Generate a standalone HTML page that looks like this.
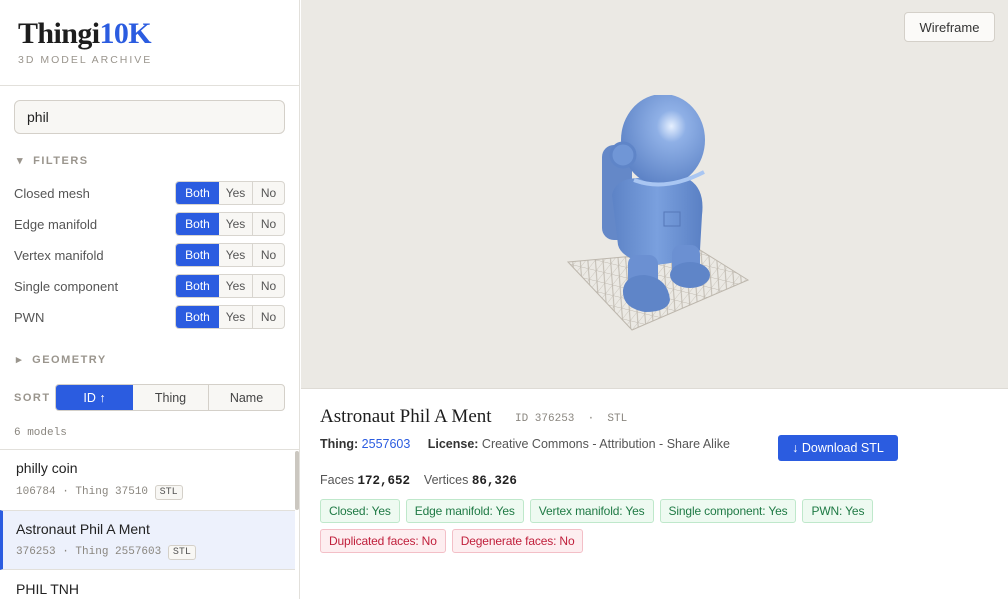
<!DOCTYPE html>
<html><head><meta charset="utf-8"><style>
*{box-sizing:border-box;margin:0;padding:0}
body{width:1008px;height:599px;overflow:hidden;font-family:"Liberation Sans",sans-serif;background:#fff;position:relative;color:#2a2a2a}
.a{position:absolute}
.side{left:0;top:0;width:300px;height:599px;border-right:1px solid #e2e0db;background:#fff}
.lbl{font-size:13px;color:#555;left:14px}
.seg{left:175px;width:110px;height:24px;border:1px solid #d8d5cf;border-radius:4px;overflow:hidden;display:flex;font-size:12px;background:#f8f7f4}
.seg div{display:flex;align-items:center;justify-content:center;color:#555}
.seg .b{width:43px;background:#2b5ce0;color:#fff}
.seg .y{width:34px;border-right:1px solid #d8d5cf}
.seg .n{flex:1}
.cap{font-size:11px;letter-spacing:1.5px;color:#9a958d;font-weight:bold}
.mono{font-family:"Liberation Mono",monospace}
.tag{display:inline-block;font-size:12px;padding:4px 8px;border-radius:3px;margin-right:6px;letter-spacing:-0.15px}
.g{background:#eefaf1;border:1px solid #bfe8cb;color:#1f7a45}
.r{background:#fdeef0;border:1px solid #f3bfc7;color:#c0203c}
</style></head><body>
<div class="a side">
  <div class="a" style="left:18px;top:17px;font-family:'Liberation Serif',serif;font-weight:bold;font-size:30px;letter-spacing:-0.6px;color:#1d1d1d">Thingi<span style="color:#2b5ce0">10K</span></div>
  <div class="a cap" style="left:18px;top:54px;font-weight:normal;font-size:10.5px;letter-spacing:2px">3D MODEL ARCHIVE</div>
  <div class="a" style="left:0;top:85px;width:299px;border-top:1px solid #e2e0db"></div>
  <div class="a" style="left:14px;top:100px;width:271px;height:34px;border:1px solid #d4d0c9;border-radius:6px;background:#f8f7f4;padding:8px 12px;font-size:14px;color:#222">phil</div>
  <div class="a cap" style="left:17px;top:154px">▾&nbsp; FILTERS</div>
  <div class="a lbl" style="top:186px">Closed mesh</div>
  <div class="a seg" style="top:181px"><div class="b">Both</div><div class="y">Yes</div><div class="n">No</div></div>
  <div class="a lbl" style="top:217px">Edge manifold</div>
  <div class="a seg" style="top:212px"><div class="b">Both</div><div class="y">Yes</div><div class="n">No</div></div>
  <div class="a lbl" style="top:248px">Vertex manifold</div>
  <div class="a seg" style="top:243px"><div class="b">Both</div><div class="y">Yes</div><div class="n">No</div></div>
  <div class="a lbl" style="top:279px">Single component</div>
  <div class="a seg" style="top:274px"><div class="b">Both</div><div class="y">Yes</div><div class="n">No</div></div>
  <div class="a lbl" style="top:310px">PWN</div>
  <div class="a seg" style="top:305px"><div class="b">Both</div><div class="y">Yes</div><div class="n">No</div></div>
  <div class="a cap" style="left:16px;top:353px">▸&nbsp; GEOMETRY</div>
  <div class="a cap" style="left:14px;top:392px">SORT</div>
  <div class="a" style="left:55px;top:384px;width:230px;height:27px;border:1px solid #d4d0c9;border-radius:4px;overflow:hidden;display:flex;font-size:12.5px;background:#f8f7f4;color:#444">
    <div style="width:77px;background:#2b5ce0;color:#fff;display:flex;align-items:center;justify-content:center">ID ↑</div>
    <div style="width:76px;border-right:1px solid #d4d0c9;display:flex;align-items:center;justify-content:center">Thing</div>
    <div style="flex:1;display:flex;align-items:center;justify-content:center">Name</div>
  </div>
  <div class="a mono" style="left:14px;top:427px;font-size:11px;color:#8a867f">6 models</div>
  <div class="a" style="left:0;top:449px;width:299px;border-top:1px solid #e2e0db"></div>
  <div class="a" style="left:16px;top:460px;font-size:14px;color:#222">philly coin</div>
  <div class="a mono" style="left:16px;top:486px;font-size:11px;color:#8a867f">106784 · Thing 37510 <span style="border:1px solid #d4d0c9;border-radius:3px;padding:1px 4px;color:#555;font-size:10px;background:#f8f7f4">STL</span></div>
  <div class="a" style="left:295px;top:451px;width:4px;height:59px;background:#cbc7c0;border-radius:2px"></div>
  <div class="a" style="left:0;top:510px;width:295px;height:60px;background:#edf1fc;border-top:1px solid #e2e0db;border-bottom:1px solid #e2e0db;border-left:3px solid #2b5ce0"></div>
  <div class="a" style="left:16px;top:521px;font-size:14px;color:#222">Astronaut Phil A Ment</div>
  <div class="a mono" style="left:16px;top:546px;font-size:11px;color:#8a867f">376253 · Thing 2557603 <span style="border:1px solid #d4d0c9;border-radius:3px;padding:1px 4px;color:#555;font-size:10px;background:#f8f7f4">STL</span></div>
  <div class="a" style="left:16px;top:581px;font-size:14px;color:#222">PHIL TNH</div>
</div>
<div class="a" style="left:301px;top:0;width:707px;height:389px;background:#ebe9e4;border-bottom:1px solid #dedbd5"></div>
<div class="a" style="left:904px;top:12px;width:91px;height:30px;background:#fbfaf8;border:1px solid #d4d0c9;border-radius:4px;font-size:13px;color:#333;display:flex;align-items:center;justify-content:center">Wireframe</div>
<svg class="a" style="left:560px;top:95px" width="210" height="240" viewBox="560 95 210 240">
  <defs><pattern id="gp" width="9" height="9" patternUnits="userSpaceOnUse" patternTransform="skewX(-30) rotate(12)"><path d="M0 0H9M0 0V9M0 0L9 9" stroke="#bdb7ad" stroke-width="0.8" fill="none"/></pattern>
  <radialGradient id="hg" cx="0.6" cy="0.35" r="0.7"><stop offset="0" stop-color="#e6f0ff"/><stop offset="0.25" stop-color="#8fb0e6"/><stop offset="1" stop-color="#5a80c4"/></radialGradient>
  <linearGradient id="bg" x1="0" x2="1"><stop offset="0" stop-color="#5d83c6"/><stop offset="0.5" stop-color="#7aa0de"/><stop offset="1" stop-color="#5a80c4"/></linearGradient></defs>
  <polygon points="568,262 700,250 748,280 632,330" fill="url(#gp)" stroke="#bdb7ad"/>
  <rect x="602" y="145" width="30" height="95" rx="12" fill="#6488c8"/>
  <path d="M612 195 Q615 178 640 178 L690 180 Q705 190 702 215 L700 250 Q690 262 655 265 Q622 260 618 245 Z" fill="url(#bg)"/>
  <rect x="628" y="255" width="30" height="45" rx="9" fill="#6b90d2"/>
  <path d="M623 290 Q625 275 645 275 Q668 278 670 300 Q668 312 645 312 Q622 308 623 290Z" fill="#5f85c8"/>
  <rect x="672" y="245" width="28" height="35" rx="9" fill="#6b90d2"/>
  <ellipse cx="690" cy="275" rx="20" ry="13" fill="#5f85c8"/>
  <ellipse cx="663" cy="140" rx="42" ry="46" fill="url(#hg)"/>
  <path d="M634 180 Q665 192 704 172" stroke="#a9c6f2" stroke-width="4" fill="none"/>
  <circle cx="623" cy="155" r="12" fill="#7096d6" stroke="#5f85c8" stroke-width="3"/>
  <rect x="664" y="212" width="16" height="14" fill="none" stroke="#5577b8"/>
</svg>
<div class="a" style="left:320px;top:406px;font-family:'Liberation Serif',serif;font-size:19px;color:#1d1d1d">Astronaut Phil A Ment</div>
<div class="a mono" style="left:515px;top:413px;font-size:11px;color:#8a867f">ID 376253 &nbsp;· &nbsp;STL</div>
<div class="a" style="left:320px;top:437px;font-size:12.5px;color:#555"><b style="color:#333">Thing:</b> <span style="color:#2b5ce0">2557603</span>&nbsp;&nbsp;&nbsp;&nbsp;&nbsp;<b style="color:#333">License:</b> Creative Commons - Attribution - Share Alike</div>
<div class="a" style="left:778px;top:435px;width:120px;height:26px;background:#2b5ce0;border-radius:3px;color:#fff;font-size:12.5px;display:flex;align-items:center;justify-content:center">↓ Download STL</div>
<div class="a" style="left:320px;top:473px;font-size:12.5px;color:#555">Faces <b class="mono" style="color:#222">172,652</b>&nbsp;&nbsp;&nbsp; Vertices <b class="mono" style="color:#222">86,326</b></div>
<div class="a" style="left:320px;top:499px;white-space:nowrap"><span class="tag g">Closed: Yes</span><span class="tag g">Edge manifold: Yes</span><span class="tag g">Vertex manifold: Yes</span><span class="tag g">Single component: Yes</span><span class="tag g">PWN: Yes</span></div>
<div class="a" style="left:320px;top:529px;white-space:nowrap"><span class="tag r">Duplicated faces: No</span><span class="tag r">Degenerate faces: No</span></div>
</body></html>
